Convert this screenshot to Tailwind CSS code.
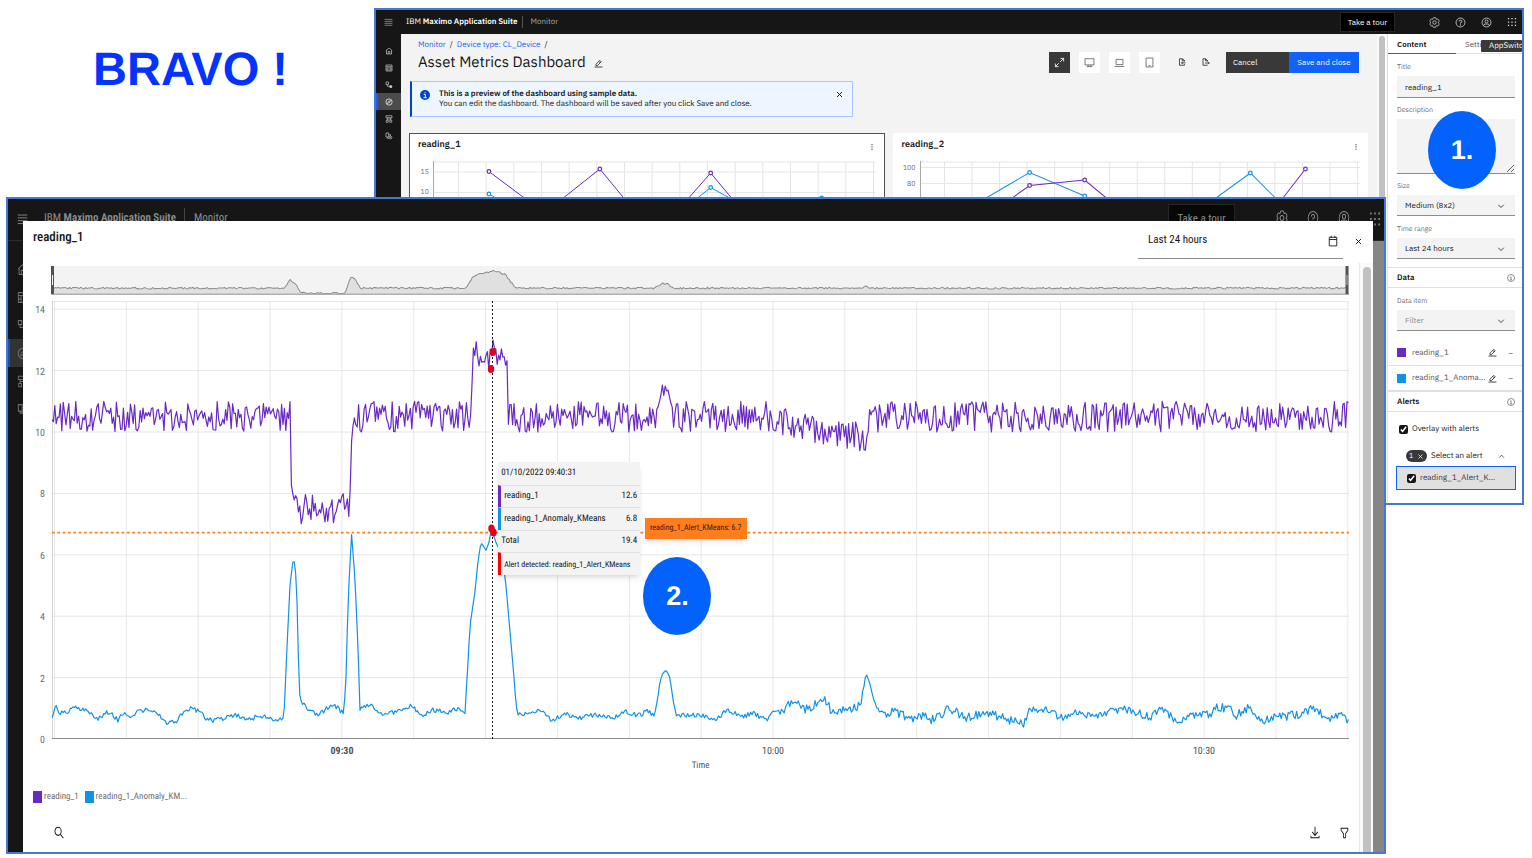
<!DOCTYPE html>
<html lang="en">
<head>
<meta charset="utf-8">
<title>Asset Metrics Dashboard</title>
<script src="https://cdn.jsdelivr.net/npm/@tailwindcss/browser@4"></script>
</head>
<body class="relative h-screen overflow-hidden bg-white font-['IBM_Plex_Sans',Roboto,sans-serif] text-[#161616] [text-rendering:geometricPrecision]">

<svg class="hidden" aria-hidden="true">
  <defs>
    <symbol id="menu" viewBox="0 0 32 32" preserveAspectRatio="none"><path d="M2 5H30M2 12H30M2 19H30M2 26H30" stroke="currentColor" stroke-width="2.4"/></symbol>
    <symbol id="home" viewBox="0 0 32 32" preserveAspectRatio="none"><path d="M3 15 16 4 29 15M6 13V28H26V13M12.500 28V18H19.500V28" fill="none" stroke="currentColor" stroke-width="2.800"/></symbol>
    <symbol id="board" viewBox="0 0 32 32" preserveAspectRatio="none"><path d="M4 4H28V28H4ZM4 11H28M12 11V28M20 11V28M4 20H12M20 20H28" fill="none" stroke="currentColor" stroke-width="2.800"/></symbol>
    <symbol id="device" viewBox="0 0 32 32" preserveAspectRatio="none"><path d="M4 4H14V14H4ZM9 14V21H18" fill="none" stroke="currentColor" stroke-width="2.800"/><circle cx="23" cy="22" r="6" fill="currentColor"/></symbol>
    <symbol id="compass" viewBox="0 0 32 32" preserveAspectRatio="none"><circle cx="16" cy="16" r="12.500" fill="none" stroke="currentColor" stroke-width="2.800"/><path d="M22 10 18.500 18.500 10 22 13.500 13.500Z" fill="none" stroke="currentColor" stroke-width="2.400"/></symbol>
    <symbol id="tree" viewBox="0 0 32 32" preserveAspectRatio="none"><path d="M4 3H28V11H4ZM9 11V20M23 11V20M9 16H23M5 21H13V29H5ZM19 21H27V29H19Z" fill="none" stroke="currentColor" stroke-width="2.800"/></symbol>
    <symbol id="copy" viewBox="0 0 32 32" preserveAspectRatio="none"><path d="M4 4H15V20H4ZM15 11H22V16M9 20V25H16" fill="none" stroke="currentColor" stroke-width="2.800"/><circle cx="22" cy="22" r="5.500" fill="none" stroke="currentColor" stroke-width="2.800"/><circle cx="22" cy="22" r="2" fill="currentColor"/></symbol>
    <symbol id="gear" viewBox="0 0 32 32" preserveAspectRatio="none"><g fill="none" stroke="currentColor" stroke-width="2.200"><path d="M27,16.760c0-.25,0-.5,0-.76s0-.51,0-.77l1.920-1.680A2,2,0,0,0,29.300,11L26.940,7a2,2,0,0,0-1.730-1,2,2,0,0,0-.64.1l-2.430.82a11.350,11.350,0,0,0-1.310-.75l-.51-2.520a2,2,0,0,0-2-1.610H13.640a2,2,0,0,0-2,1.610l-.51,2.520a11.480,11.480,0,0,0-1.320.75L7.430,6.060A2,2,0,0,0,6.790,6,2,2,0,0,0,5.060,7L2.700,11a2,2,0,0,0,.41,2.510L5,15.240c0,.25,0,.5,0,.76s0,.51,0,.77L3.110,18.450A2,2,0,0,0,2.700,21L5.060,25a2,2,0,0,0,1.730,1,2,2,0,0,0,.64-.1l2.430-.82a11.350,11.350,0,0,0,1.310.75l.51,2.520a2,2,0,0,0,2,1.610h4.720a2,2,0,0,0,2-1.610l.51-2.520a11.480,11.480,0,0,0,1.320-.75l2.420.82a2,2,0,0,0,.64.1,2,2,0,0,0,1.730-1L29.300,21a2,2,0,0,0-.41-2.510Z"/><circle cx="16" cy="16" r="5"/></g></symbol>
    <symbol id="help" viewBox="0 0 32 32" preserveAspectRatio="none"><circle cx="16" cy="16" r="13" fill="none" stroke="currentColor" stroke-width="2.200"/><path d="M12 13V12.500A3.500 3.500 0 0 1 15.500 9H17A3.800 3.800 0 0 1 17 16.500H16V19" fill="none" stroke="currentColor" stroke-width="2.400"/><circle cx="16" cy="23" r="1.700" fill="currentColor"/></symbol>
    <symbol id="user" viewBox="0 0 32 32" preserveAspectRatio="none"><g fill="none" stroke="currentColor" stroke-width="2.200"><circle cx="16" cy="16" r="13"/><circle cx="16" cy="13" r="4.500"/><path d="M8 26V24A4 4 0 0 1 12 20.500H20A4 4 0 0 1 24 24V26"/></g></symbol>
    <symbol id="apps" viewBox="0 0 32 32" preserveAspectRatio="none"><path d="M3 3h4v4H3zM14 3h4v4h-4zM25 3h4v4h-4zM3 14h4v4H3zM14 14h4v4h-4zM25 14h4v4h-4zM3 25h4v4H3zM14 25h4v4h-4zM25 25h4v4h-4z" fill="currentColor"/></symbol>
    <symbol id="edit" viewBox="0 0 32 32"><path d="M2 28.500H30M7 23.500V18.500L20.500 5 25.500 10 12 23.500ZM17 8.500 22 13.500" fill="none" stroke="currentColor" stroke-width="2.800"/></symbol>
    <symbol id="close" viewBox="0 0 32 32" preserveAspectRatio="none"><path d="M7 7 25 25M25 7 7 25" stroke="currentColor" stroke-width="3.400"/></symbol>
    <symbol id="expand" viewBox="0 0 32 32"><path d="M19 4H28V13M28 4 18 14M4 19V28H13M4 28 14 18" fill="none" stroke="currentColor" stroke-width="2.400"/></symbol>
    <symbol id="monitor" viewBox="0 0 32 32"><path d="M3 5H29V23H3ZM12 23V28M20 23V28M8 28H24" fill="none" stroke="currentColor" stroke-width="2.200"/></symbol>
    <symbol id="laptop" viewBox="0 0 32 32"><path d="M6 7H26V22H6ZM2 27.500H30" fill="none" stroke="currentColor" stroke-width="2.200"/></symbol>
    <symbol id="tablet" viewBox="0 0 32 32"><path d="M6 3H26V29H6ZM13 25H19" fill="none" stroke="currentColor" stroke-width="2.200"/></symbol>
    <symbol id="import" viewBox="0 0 32 32"><path d="M26 14V10L18 3H6V29H26V25M17 4V11H26M30 19.500H14M19 14.500 14 19.500 19 24.500" fill="none" stroke="currentColor" stroke-width="3"/></symbol>
    <symbol id="export" viewBox="0 0 32 32"><path d="M22 14V10L15 3H4V29H22M14 4V11H22M12 20H29M24 15 29 20 24 25" fill="none" stroke="currentColor" stroke-width="3"/></symbol>
    <symbol id="dots" viewBox="0 0 32 32"><path d="M14 5h4v4h-4zM14 14h4v4h-4zM14 23h4v4h-4z" fill="currentColor"/></symbol>
    <symbol id="chevron" viewBox="0 0 32 32"><path d="M5 11 16 22 27 11" fill="none" stroke="currentColor" stroke-width="3.200"/></symbol>
    <symbol id="info" viewBox="0 0 32 32"><circle cx="16" cy="16" r="14" fill="none" stroke="currentColor" stroke-width="2.600"/><path d="M13 14H16.500V23M12 23.500H20.500" fill="none" stroke="currentColor" stroke-width="2.600"/><circle cx="16" cy="9.500" r="1.800" fill="currentColor"/></symbol>
    <symbol id="calendar" viewBox="0 0 32 32" preserveAspectRatio="none"><path d="M4 6H28V29H4ZM4 12H28M10 2V8M22 2V8" fill="none" stroke="currentColor" stroke-width="2.600"/></symbol>
    <symbol id="search" viewBox="0 0 32 32" preserveAspectRatio="none"><circle cx="13" cy="13" r="10" fill="none" stroke="currentColor" stroke-width="2.800"/><path d="M20 20 30 30" stroke="currentColor" stroke-width="2.800"/></symbol>
    <symbol id="download" viewBox="0 0 32 32" preserveAspectRatio="none"><path d="M16 2V23M7 14.500 16 23.500 25 14.500M3 24V29H29V24" fill="none" stroke="currentColor" stroke-width="2.800"/></symbol>
    <symbol id="filter" viewBox="0 0 32 32" preserveAspectRatio="none"><path d="M4 3.500H28V9L19.500 18V28.500H12.500V18L4 9Z" fill="none" stroke="currentColor" stroke-width="2.800"/></symbol>
  </defs>
</svg>

<h1 class="absolute top-[42px] left-[93px] font-['Liberation_Sans',Arial,sans-serif] text-[47px] leading-[54px] font-bold whitespace-pre text-[#0433ff]">BRAVO !</h1>

<!-- Dashboard editor window -->
<section class="absolute top-2 right-2 left-[374px] flex flex-col overflow-hidden border-2 border-[#4578d0] bg-white">
  <header class="flex h-6 shrink-0 items-center bg-[#161616] pr-[5px] pl-[8px] text-white">
    <button class="text-[#a8a8a8]" aria-label="Menu"><svg class="h-[9px] w-[9px]"><use href="#menu"/></svg></button>
    <span class="ml-[13px] text-[8px] whitespace-nowrap">IBM <b class="font-semibold">Maximo Application Suite</b></span>
    <span class="ml-[5px] h-[12px] w-px bg-[#525252]"></span>
    <span class="ml-[7px] text-[8px] text-[#a8a8a8]">Monitor</span>
    <button class="mr-[34px] ml-auto h-5 w-[55px] border border-[#262626] bg-black text-[8px]">Take a tour</button>
    <nav class="flex items-center gap-[15px] text-[#e0e0e0]" aria-label="Tools">
      <button aria-label="Settings"><svg class="h-[11px] w-[11px]"><use href="#gear"/></svg></button>
      <button aria-label="Help"><svg class="h-[11px] w-[11px]"><use href="#help"/></svg></button>
      <button aria-label="Profile"><svg class="h-[11px] w-[11px]"><use href="#user"/></svg></button>
      <button aria-label="Apps"><svg class="h-[10px] w-[10px]"><use href="#apps"/></svg></button>
    </nav>
  </header>

  <div class="flex">
    <nav class="flex w-[25px] shrink-0 flex-col bg-[#161616] pt-2 text-[#c6c6c6]" aria-label="Sections">
      <a href="#" class="flex h-[17px] items-center justify-center" aria-label="Home"><svg class="h-2 w-2"><use href="#home"/></svg></a>
      <a href="#" class="flex h-[17px] items-center justify-center" aria-label="Boards"><svg class="h-2 w-2"><use href="#board"/></svg></a>
      <a href="#" class="flex h-[17px] items-center justify-center" aria-label="Devices"><svg class="h-2 w-2"><use href="#device"/></svg></a>
      <a href="#" class="flex h-[17px] items-center justify-center border-l-2 border-[#0f62fe] bg-[#4c4c4c] pr-[2px] text-white" aria-label="Monitor"><svg class="h-2 w-2"><use href="#compass"/></svg></a>
      <a href="#" class="flex h-[17px] items-center justify-center" aria-label="Hierarchy"><svg class="h-2 w-2"><use href="#tree"/></svg></a>
      <a href="#" class="flex h-[17px] items-center justify-center" aria-label="Models"><svg class="h-2 w-2"><use href="#copy"/></svg></a>
    </nav>

    <main class="min-w-0 flex-1 bg-[#f3f3f3] pt-[6px] pr-[9px] pl-2">
      <div class="flex items-center pl-[9px]">
        <div class="mr-auto">
          <nav class="flex gap-1 text-[8px] leading-[11px]" aria-label="Breadcrumb">
            <a href="#" class="text-[#0f62fe]">Monitor</a><span>/</span><a href="#" class="text-[#0f62fe]">Device type: CL_Device</a><span>/</span>
          </nav>
          <h2 class="flex items-center gap-2 text-[15px] leading-[24px]">Asset Metrics Dashboard <button aria-label="Rename"><svg class="h-[9px] w-[9px]"><use href="#edit"/></svg></button></h2>
        </div>
        <div class="mt-[9px] mr-[9px] flex items-center">
          <div class="flex gap-[9px]">
            <button class="flex h-[21px] w-[21px] items-center justify-center bg-[#393939] text-white" aria-label="Fit"><svg class="h-[11px] w-[11px]"><use href="#expand"/></svg></button>
            <button class="flex h-[21px] w-[21px] items-center justify-center bg-white text-[#525252]" aria-label="Desktop"><svg class="h-[11px] w-[11px]"><use href="#monitor"/></svg></button>
            <button class="flex h-[21px] w-[21px] items-center justify-center bg-white text-[#525252]" aria-label="Laptop"><svg class="h-[11px] w-[11px]"><use href="#laptop"/></svg></button>
            <button class="flex h-[21px] w-[21px] items-center justify-center bg-white text-[#525252]" aria-label="Tablet"><svg class="h-[11px] w-[11px]"><use href="#tablet"/></svg></button>
          </div>
          <button class="ml-[18px]" aria-label="Import"><svg class="h-2 w-2"><use href="#import"/></svg></button>
          <button class="ml-4" aria-label="Export"><svg class="h-2 w-2"><use href="#export"/></svg></button>
          <button class="ml-4 h-[21px] w-[63px] bg-[#393939] pl-[7px] text-left text-[8px] text-white">Cancel</button>
          <button class="h-[21px] w-[70px] bg-[#0f62fe] text-[8px] text-white">Save and close</button>
        </div>
      </div>

      <div class="mt-[6px] ml-px flex h-9 w-[443px] items-start border border-l-2 border-[#a6c8ff] border-l-[#0043ce] bg-[#edf5ff] pt-[7px] pr-2 pl-2">
        <svg class="mt-px h-[10px] w-[10px] shrink-0" viewBox="0 0 32 32"><circle cx="16" cy="16" r="16" fill="#0043ce"/><path d="M12 14H17V24M11 24.500H22M16 7V10" fill="none" stroke="#fff" stroke-width="3"/></svg>
        <p class="ml-[9px] text-[8px] leading-[10px]"><b class="font-semibold">This is a preview of the dashboard using sample data.</b><br>You can edit the dashboard. The dashboard will be saved after you click Save and close.</p>
        <button class="mt-px ml-auto" aria-label="Dismiss"><svg class="h-[9px] w-[9px]"><use href="#close"/></svg></button>
      </div>

      <div class="mt-4 grid grid-cols-2 gap-2">
        <article class="border border-[#525252] bg-white pt-[5px]">
          <h3 class="flex items-center justify-between pr-2 pl-2 text-[9px] leading-[12px] font-semibold">reading_1 <button class="mt-1" aria-label="Card actions"><svg class="h-2 w-2"><use href="#dots"/></svg></button></h3>
          <div class="mt-[9px] flex pr-[8px]">
            <div class="w-[23px] pt-[2px] pr-1 text-right text-[7px] leading-[20px] text-[#6f6f6f]"><p>15</p><p>10</p></div>
            <svg id="mini1" class="h-20 min-w-0 flex-1" viewBox="432 160 443 80" preserveAspectRatio="none"></svg>
          </div>
        </article>
        <article class="bg-white pt-[6px]">
          <h3 class="flex items-center justify-between pr-2 pl-[9px] text-[9px] leading-[12px] font-semibold">reading_2 <button class="mt-1" aria-label="Card actions"><svg class="h-2 w-2"><use href="#dots"/></svg></button></h3>
          <div class="mt-[9px] flex pr-[8px]">
            <div class="w-[27px] pr-1 text-right text-[7px] leading-[16px] text-[#6f6f6f]"><p>100</p><p>80</p></div>
            <svg id="mini2" class="h-20 min-w-0 flex-1" viewBox="920 160 440 80" preserveAspectRatio="none"></svg>
          </div>
        </article>
      </div>
    </main>

    <div class="flex w-[11px] shrink-0 justify-center border-r border-[#e0e0e0] bg-[#fafafa] pt-[2px]"><div class="w-[6px] rounded-full bg-[#c1c1c1]"></div></div>

    <aside class="w-[134px] shrink-0 bg-white pb-[13px] text-[8px]">
      <div class="flex h-5 border-b border-[#e0e0e0]">
        <button class="h-5 w-[68px] border-b border-[#0f62fe] pl-[9px] text-left font-semibold">Content</button>
        <button class="pl-[9px] text-[#525252]">Settings</button>
      </div>
      <div class="pt-2 pr-[7px] pl-[9px]">
        <label for="title" class="block h-[14px] text-[7px] leading-[10px] text-[#6f6f6f]">Title</label>
        <input id="title" value="reading_1" class="block h-[22px] w-full border-b border-[#8d8d8d] bg-[#f3f3f3] px-2">
        <label for="desc" class="mt-[7px] block h-[14px] text-[7px] leading-[10px] text-[#6f6f6f]">Description</label>
        <textarea id="desc" class="block h-[55px] w-full resize-y border-b border-[#8d8d8d] bg-[#f3f3f3] px-2"></textarea>
        <label for="size" class="mt-[7px] block h-[14px] text-[7px] leading-[10px] text-[#6f6f6f]">Size</label>
        <div class="relative"><select id="size" class="block h-[21px] w-full appearance-none border-b border-[#8d8d8d] bg-[#f3f3f3] px-2"><option>Medium (8x2)</option></select><svg class="pointer-events-none absolute top-[7px] right-[10px] h-2 w-2"><use href="#chevron"/></svg></div>
        <label for="range" class="mt-2 block h-[14px] text-[7px] leading-[10px] text-[#6f6f6f]">Time range</label>
        <div class="relative"><select id="range" class="block h-[21px] w-full appearance-none border-b border-[#8d8d8d] bg-[#f3f3f3] px-2"><option>Last 24 hours</option></select><svg class="pointer-events-none absolute top-[7px] right-[10px] h-2 w-2"><use href="#chevron"/></svg></div>
      </div>
      <h3 class="mt-2 flex h-[21px] items-center justify-between border-y border-[#e0e0e0] pr-[7px] pl-[9px] font-semibold">Data <svg class="h-2 w-2 text-[#525252]"><use href="#info"/></svg></h3>
      <div class="pt-2 pr-[7px] pl-[9px]">
        <label for="item" class="block h-[14px] text-[7px] leading-[10px] text-[#6f6f6f]">Data item</label>
        <div class="relative"><select id="item" class="block h-[21px] w-full appearance-none border-b border-[#8d8d8d] bg-[#f3f3f3] px-2 text-[#8d8d8d]"><option>Filter</option></select><svg class="pointer-events-none absolute top-[7px] right-[10px] h-2 w-2"><use href="#chevron"/></svg></div>
      </div>
      <ul class="mt-[9px] text-[#525252]">
        <li class="flex h-[26px] items-center border-b border-[#e0e0e0] px-[9px]"><i class="mr-[6px] h-[9px] w-[9px] bg-[#6929c4]"></i><span class="mr-auto">reading_1</span><button class="text-[#161616]" aria-label="Edit reading_1"><svg class="h-[9px] w-[9px]"><use href="#edit"/></svg></button><button class="ml-[11px]" aria-label="Remove reading_1">–</button></li>
        <li class="flex h-[26px] items-center border-b-2 border-[#e0e0e0] px-[9px]"><i class="mr-[6px] h-[9px] w-[9px] bg-[#1192e8]"></i><span class="mr-auto">reading_1_Anoma...</span><button class="text-[#161616]" aria-label="Edit anomaly"><svg class="h-[9px] w-[9px]"><use href="#edit"/></svg></button><button class="ml-[11px]" aria-label="Remove anomaly">–</button></li>
      </ul>
      <h3 class="flex h-5 items-center justify-between border-b border-[#e0e0e0] pr-[7px] pl-[9px] font-semibold">Alerts <svg class="h-2 w-2 text-[#525252]"><use href="#info"/></svg></h3>
      <label class="mt-3 flex items-center gap-1 pl-[11px] leading-[10px]"><input type="checkbox" checked class="h-[9px] w-[9px] accent-[#161616]">Overlay with alerts</label>
      <div class="mt-[15px] flex h-[14px] items-center pr-[17px] pl-[18px]">
        <button class="flex h-3 w-[21px] items-center justify-center gap-1 rounded-full bg-[#393939] text-[7px] text-white" aria-label="Clear 1 alert">1 <svg class="h-[7px] w-[7px]"><use href="#close"/></svg></button>
        <span class="mr-auto ml-1">Select an alert</span>
        <svg class="h-[7px] w-[7px] rotate-180"><use href="#chevron"/></svg>
      </div>
      <label class="mt-[3px] mr-[6px] ml-2 flex h-6 items-center gap-1 border border-[#0f62fe] bg-[#e0e0e0] pl-[10px] text-[#393939]"><input type="checkbox" checked class="h-[9px] w-[9px] accent-[#161616]">reading_1_Alert_K...</label>
    </aside>
  </div>
  <div class="absolute top-[30px] right-0 h-[12px] w-[41px] overflow-hidden rounded-[1px] bg-[#393939] pl-2 text-[8px] leading-[12px] text-white" role="tooltip">AppSwitcher</div>
</section>

<div class="absolute top-[111px] right-9 flex h-[78px] w-[68px] items-center justify-center rounded-[50%] bg-[#0362fc] font-['Liberation_Sans',Arial,sans-serif] text-[27px] font-bold text-white">1.</div>

<!-- Expanded card window -->
<section class="absolute top-[197px] right-[146px] bottom-1 left-[6px] flex flex-col overflow-hidden border-2 border-[#4578d0] bg-[#868686] font-['Roboto_Condensed',Roboto,sans-serif]">
  <header class="flex h-[42px] shrink-0 items-center border-b border-[#2c2c2c] bg-[#161616] pl-[9px] text-[11px] text-[#8d8d8d]">
    <button aria-label="Menu"><svg class="h-[13px] w-[11px]"><use href="#menu"/></svg></button>
    <span class="mb-[2px] ml-4">IBM <b class="font-semibold">Maximo Application Suite</b></span>
    <span class="mb-2 ml-[8px] h-4 w-px bg-[#444]"></span>
    <span class="mb-[2px] ml-[9px]">Monitor</span>
    <button class="mr-[41px] ml-auto h-8 w-[67px] border border-[#262626] bg-[#080808]">Take a tour</button>
    <nav class="mb-1 flex items-center gap-[19px]" aria-label="Tools">
      <button aria-label="Settings"><svg class="h-4 w-3"><use href="#gear"/></svg></button>
      <button aria-label="Help"><svg class="h-4 w-3"><use href="#help"/></svg></button>
      <button aria-label="Profile"><svg class="h-4 w-3"><use href="#user"/></svg></button>
      <button class="mt-[3px] mr-[3px]" aria-label="Apps"><svg class="h-4 w-3"><use href="#apps"/></svg></button>
    </nav>
  </header>
  <nav class="flex w-10 flex-1 flex-col bg-[#161616] pt-[14px] text-[#6f6f6f]" aria-label="Sections">
    <a href="#" class="flex h-7 items-center pl-[9px]" aria-label="Home"><svg class="h-[13px] w-[11px]"><use href="#home"/></svg></a>
    <a href="#" class="flex h-7 items-center pl-[9px]" aria-label="Boards"><svg class="h-[13px] w-[11px]"><use href="#board"/></svg></a>
    <a href="#" class="flex h-7 items-center pl-[9px]" aria-label="Devices"><svg class="h-[13px] w-[11px]"><use href="#device"/></svg></a>
    <a href="#" class="flex h-7 items-center border-l-2 border-[#1d4fa8] bg-[#333] pl-[7px]" aria-label="Monitor"><svg class="h-[13px] w-[11px]"><use href="#compass"/></svg></a>
    <a href="#" class="flex h-7 items-center pl-[9px]" aria-label="Hierarchy"><svg class="h-[13px] w-[11px]"><use href="#tree"/></svg></a>
    <a href="#" class="flex h-7 items-center pl-[9px]" aria-label="Models"><svg class="h-[13px] w-[11px]"><use href="#copy"/></svg></a>
  </nav>

  <div class="absolute top-[22px] right-[11px] bottom-0 left-[15px] flex flex-col bg-white" role="dialog" aria-label="reading_1">
    <div class="flex h-[42px] shrink-0 items-start pl-[10px]">
      <h2 class="mr-auto pt-2 text-[13px] leading-[18px] font-medium">reading_1</h2>
      <label class="mr-[11px] flex h-[38px] w-[205px] items-center border-b border-[#8d8d8d] pt-[2px] pr-[5px] pl-[10px]">
        <input value="Last 24 hours" aria-label="Time range" class="min-w-0 flex-1 text-[11px]">
        <svg class="h-3 w-[10px]"><use href="#calendar"/></svg>
      </label>
      <button class="mt-[16px] mr-[10px]" aria-label="Close"><svg class="h-[9px] w-[9px]"><use href="#close"/></svg></button>
    </div>
    <div class="flex min-h-0 flex-1">
      <div class="flex min-w-0 flex-1 flex-col pt-[3px] pr-[10px] pl-[10px]">
        <svg id="overview" class="ml-[18px] h-[29px] shrink-0" viewBox="51 266 1299 29" preserveAspectRatio="none"></svg>
        <div class="relative mt-[6px] ml-[19px] min-h-0 flex-1">
          <svg id="chart" class="h-full w-full overflow-visible text-[10px]"></svg>
          <div class="absolute top-[36.7%] left-[34.4%] w-[142px] bg-[#f3f3f3] text-[9px] shadow-md" role="tooltip">
            <p class="flex h-[23px] items-center px-[3px] pt-[2px]">01/10/2022 09:40:31</p>
            <p class="flex h-[22px] items-center justify-between border-t border-l-[3px] border-t-[#e0e0e0] border-l-[#6929c4] px-[3px] pt-[2px]"><span>reading_1</span><span>12.6</span></p>
            <p class="flex h-[23px] items-center justify-between border-t border-l-[3px] border-t-[#e0e0e0] border-l-[#1192e8] px-[3px] pt-[2px]"><span>reading_1_Anomaly_KMeans</span><span>6.8</span></p>
            <p class="flex h-[22px] items-center justify-between border-t border-[#e0e0e0] px-[3px] pt-[2px]"><span>Total</span><span>19.4</span></p>
            <p class="flex h-[23px] items-center border-t border-l-[3px] border-t-[#e0e0e0] border-l-[#ff0000] pt-[2px] pl-[3px] text-[8px] whitespace-nowrap">Alert detected: reading_1_Alert_KMeans</p>
          </div>
          <div class="absolute top-[49.5%] left-[45.7%] flex h-[21px] w-[102px] items-center justify-center bg-[#ff7d1a] text-[8px] whitespace-nowrap text-[#262626] shadow-md">reading_1_Alert_KMeans: 6.7</div>
        </div>
        <p class="mt-[20px] mb-[17px] pl-[19px] text-center text-[9px] leading-[14px] text-[#525252]">Time</p>
        <div class="flex items-center text-[9px] leading-[14px] text-[#6f6f6f]">
          <i class="mr-[2px] h-3 w-[9px] bg-[#6929c4]"></i>reading_1
          <i class="mr-[2px] ml-[6px] h-3 w-[9px] bg-[#1192e8]"></i>reading_1_Anomaly_KM...
        </div>
        <div class="mt-[22px] mb-[13px] flex items-center pl-[21px]">
          <button class="mr-auto" aria-label="Search"><svg class="h-[13px] w-[10px]"><use href="#search"/></svg></button>
          <button class="mr-5" aria-label="Download"><svg class="h-[13px] w-[10px]"><use href="#download"/></svg></button>
          <button aria-label="Filter"><svg class="h-3 w-[9px]"><use href="#filter"/></svg></button>
        </div>
      </div>
      <div class="flex w-[14px] shrink-0 border-l border-[#e8e8e8] bg-[#fafafa] pt-1 pl-[3px]"><div class="w-2 rounded-t-full bg-[#c1c1c1]"></div></div>
    </div>
  </div>
</section>

<div class="absolute top-[557px] left-[42%] flex h-[78px] w-[68px] items-center justify-center rounded-[50%] bg-[#0362fc] font-['Liberation_Sans',Arial,sans-serif] text-[27px] font-bold text-white">2.</div>

<script>
  const PURPLE = '#6929c4', BLUE = '#1192e8';
  let seed = 20221;
  const rnd = () => (seed = (seed * 16807) % 2147483647) / 2147483647;
  const line = (pts) => 'M' + pts.map(p => p[0].toFixed(1) + ' ' + p[1].toFixed(1)).join('L');
  const stroke = (d, c, w, extra) => `<path d="${d}" fill="none" stroke="${c}" stroke-width="${w}" vector-effect="non-scaling-stroke" ${extra || ''}/>`;
  const lerp = (k, x) => {
    let i = 1;
    while (i < k.length - 1 && k[i][0] < x) i++;
    const [a, b] = [k[i - 1], k[i]];
    const t = Math.min(1, Math.max(0, (x - a[0]) / (b[0] - a[0])));
    return a[1] + (b[1] - a[1]) * t;
  };

  // Small card charts
  function mini(id, x0, x1, first, step, rows, series) {
    let s = '';
    for (let x = first; x < x1; x += step) s += stroke(`M${x} 162V240`, '#e5e5e5', 1);
    rows.forEach(y => s += stroke(`M${x0} ${y}H${x1}`, '#e5e5e5', 1));
    s += stroke(`M${x0 + 0.5} 161V240`, '#a8a8a8', 1);
    series.forEach(([c, pts]) => {
      s += stroke(line(pts), c, 1);
      pts.forEach(p => s += `<circle cx="${p[0]}" cy="${p[1]}" r="1.800" fill="#fff" stroke="${c}" stroke-width="1.200"/>`);
    });
    document.getElementById(id).innerHTML = s;
  }
  mini('mini1', 432, 875, 457.5, 27.7, [162, 172, 192.5, 212], [
    [PURPLE, [[488, 171.5], [543.5, 213], [599, 169], [654.5, 236], [710, 173], [765, 239], [821, 215]]],
    [BLUE, [[488, 194], [543.5, 225], [599, 215], [654.5, 232], [710, 187.5], [765, 218], [821, 198]]]]);
  mini('mini2', 920, 1360, 944.5, 27.5, [162, 167.5, 183.5, 199], [
    [BLUE, [[974, 205], [1029.5, 172.5], [1084.5, 196], [1140, 225], [1195, 213], [1250, 173], [1305, 228]]],
    [PURPLE, [[974, 225], [1029.5, 185.5], [1084.5, 180], [1140, 226], [1195, 230], [1250, 240], [1305, 169]]]]);

  // Brush overview
  const ov = [[51, 288], [284, 288], [291, 279], [292, 282], [296, 284], [301, 293], [345, 293], [350, 280], [352, 276], [356, 280], [361, 288], [467, 288], [473, 276], [484, 273], [494, 271], [500, 272], [506, 275], [516, 288], [655, 288], [663, 283.5], [668, 284], [675, 288], [863, 288], [867, 286], [871, 288], [1350, 288]];
  const op = [];
  for (let x = 52; x <= 1348; x += 1.6) op.push([x, Math.min(293.5, lerp(ov, x) - 0.7 + rnd() * 1.7)]);
  document.getElementById('overview').innerHTML =
    '<rect x="51" y="266" width="1299" height="29" fill="#f3f3f3"/>' +
    `<path d="${line(op)}V294H52Z" fill="#e0e0e0"/>` + stroke(line(op), '#8d8d8d', 1) +
    '<rect x="51" y="293.500" width="1299" height="1.500" fill="#b0b0b0"/>' +
    '<rect x="51" y="266" width="3" height="28" fill="#525252"/><rect x="52" y="275" width="1" height="10" fill="#fff"/>' +
    '<rect x="1346.500" y="266" width="3" height="28" fill="#525252"/><rect x="1347.500" y="275" width="1" height="10" fill="#bbb"/>';

  // Main chart: x axis 52..1349, y axis 0..14
  const Y = v => 438 - v * 30.7;
  const band = [[52, 10.5], [290.5, 10.5], [291.5, 7.5], [350, 7.5], [352, 10.5], [471, 10.5], [472.5, 12.5], [507, 12.5], [508.5, 10.5], [656, 10.5], [660, 10.9], [663, 11.2], [668, 11.2], [670, 10.5], [770, 10.5], [790, 10.2], [815, 10], [830, 9.9], [866, 9.85], [869, 10.5], [1349, 10.5]];
  const anomaly = [[52, .7], [56, 1.1], [60, .85], [68, .85], [74, 1.05], [84, .95], [98, .65], [105, .85], [112, .83], [118, .6], [125, .9], [128, .7], [135, .85], [148, .95], [157, .88], [167, .5], [177, .6], [186, .95], [193, 1], [199, .9], [206, .65], [214, .6], [225, .7], [235, .8], [249, .65], [262, .75], [278, .6], [284, .75], [287, 3], [290, 5], [293.5, 5.95], [296.5, 5.2], [298, 3], [300, 1.2], [306, 1.05], [316, .78], [333, 1.1], [344, .85], [346, 2], [348, 4.4], [351.5, 6.7], [355, 5.2], [358, 3], [360, .95], [370, 1.1], [382, .78], [400, .9], [410, 1.1], [422, .75], [433, .95], [447, .85], [455, 1], [465, .85], [467, 1.9], [470, 3.7], [475, 4.8], [478, 5.8], [481, 6.4], [486, 6.15], [489, 6.4], [491.5, 6.85], [496, 6.4], [502, 6], [506, 5], [510, 3.5], [514, 2], [517, .85], [530, .8], [540, .98], [552, .6], [565, .8], [580, .7], [600, .8], [612, .65], [625, .9], [637, .75], [647, .9], [655, .8], [659, 1.7], [662, 2.1], [666, 2.25], [670, 2], [673, 1.2], [677, .75], [690, .8], [705, .75], [716, .65], [728, .95], [742, .7], [752, .85], [767, .6], [776, 1], [780, .85], [790, 1.2], [798, 1.25], [804, .95], [808, 1], [815, 1.15], [821, 1.4], [826, 1.2], [833, .85], [840, .95], [850, .9], [860, 1.1], [863, 1.5], [866, 2.15], [870, 1.8], [874, 1.15], [880, .75], [895, .9], [910, .65], [920, .8], [931, .6], [950, 1], [965, .7], [990, .85], [1010, .6], [1023, .5], [1030, .9], [1050, .95], [1063, .65], [1073, .9], [1100, .7], [1110, .95], [1125, 1], [1140, .85], [1148, .7], [1160, .95], [1172, .7], [1180, .5], [1195, .8], [1206, .75], [1219, 1.05], [1230, 1], [1236, .75], [1247, 1], [1264, .55], [1275, .75], [1286, .75], [1300, .8], [1312, 1], [1326, .7], [1342, .75], [1349, .6]];
  const p1 = [], p2 = [];
  for (let x = 52; x <= 1349; x += 1.4) {
    p1.push([x, Y(lerp(band, x) + rnd() - 0.5)]);
    const v = lerp(anomaly, x);
    p2.push([x, Y(v + (v < 1.6 ? (rnd() - .5) * (x > 780 ? .3 : .16) : 0))]);
  }
  let g = '';
  for (let i = 0; i < 19; i++) g += stroke(`M${54.5 + i * 71.85} 0V438`, '#e8e8e8', 1);
  for (let v = 2; v <= 14; v += 2) g += stroke(`M52 ${Y(v)}H1349`, '#e5e5e5', 1);
  g += stroke('M52 0.500H1349', '#e8e8e8', 1);
  g += stroke('M52 0V438', '#a8a8a8', 1) + stroke('M52 437.500H1349', '#8d8d8d', 1);
  g += stroke(line(p1), PURPLE, 1.2, 'stroke-linejoin="round"') + stroke(line(p2), BLUE, 1.2, 'stroke-linejoin="round"');
  g += stroke(`M52 ${Y(6.72)}H1349`, '#ff7d1a', 1.7, 'stroke-dasharray="2.7 2.65"');
  g += stroke('M492.500 0V438', '#161616', 1, 'stroke-dasharray="2 2"');
  [[493, 51], [491, 68], [491.5, 227.5], [493.5, 231.5]].forEach(([x, y]) => g += `<ellipse cx="${x}" cy="${y}" rx="3.200" ry="4" fill="#e3001b"/>`);
  let out = `<svg width="100%" height="100%" viewBox="52 0 1297 438" preserveAspectRatio="none">${g}</svg>`;
  for (let v = 0; v <= 14; v += 2) out += `<text x="-7" y="${Y(v) / 4.38}%" dy="4" text-anchor="end" fill="#6f6f6f">${v}</text>`;
  [['22.360%', '09:30', 'bold'], ['55.590%', '10:00', 'normal'], ['88.820%', '10:30', 'normal']].forEach(([x, t, w]) =>
    out += `<text x="${x}" y="100%" dy="15" text-anchor="middle" font-weight="${w}" fill="#525252">${t}</text>`);
  document.getElementById('chart').innerHTML = out;
</script>
</body>
</html>
